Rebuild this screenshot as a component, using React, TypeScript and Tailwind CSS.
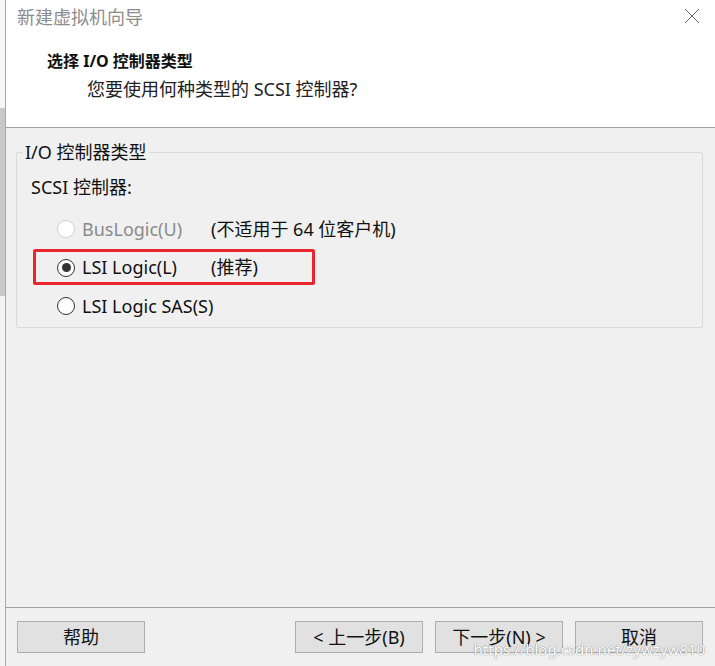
import React from "react";

const font = "font-['Noto_Sans','Noto_Sans_CJK_SC',sans-serif]";

function Radio({ checked, disabled }: { checked?: boolean; disabled?: boolean }) {
    return (
        <span
            className={`flex h-[18px] w-[18px] shrink-0 items-center justify-center rounded-full border bg-white ${
                disabled ? "border-[#cfcfcf]" : "border-[#333]"
            }`}
        >
            {checked && <span className="h-[9px] w-[9px] rounded-full bg-[#333]" />}
        </span>
    );
}

function Option({
    label,
    note,
    checked,
    disabled,
    marked,
}: {
    label: string;
    note?: string;
    checked?: boolean;
    disabled?: boolean;
    marked?: boolean;
}) {
    return (
        <div className="relative flex h-[38.5px] items-center pl-[40px]">
            {marked && (
                <span className="absolute left-[16px] top-0 h-[36px] w-[282px] rounded-[2px] border-[3px] border-[#e8262e]" />
            )}
            <Radio checked={checked} disabled={disabled} />
            <span
                className={`ml-[7px] w-[122px] shrink-0 whitespace-nowrap text-[18px] ${
                    disabled ? "text-[#8a8a8a]" : "text-[#111]"
                }`}
            >
                {label}
            </span>
            {note && <span className="ml-[7px] whitespace-nowrap text-[18px] text-[#111]">{note}</span>}
        </div>
    );
}

function Button({ children }: { children: React.ReactNode }) {
    return (
        <button className="flex h-[32px] w-[128px] items-center justify-center border border-[#adadad] bg-[#e1e1e1] text-[18px] text-[#111]">
            {children}
        </button>
    );
}

export default function App() {
    return (
        <div className={`flex h-[666px] w-[715px] overflow-hidden bg-white ${font}`}>
            {/* strip of the window behind */}
            <div className="flex w-[5px] flex-col">
                <div className="h-[108px] bg-[#f7f7f7]" />
                <div className="h-[188px] bg-[#c9c9c9]" />
                <div className="flex-1 bg-[#f3f3f3]" />
            </div>
            <div className="w-px bg-[#a9a9a9]" />

            <div className="relative flex flex-1 flex-col">
                {/* title bar + header */}
                <div className="h-[127px] bg-white">
                    <div className="flex h-[34px] items-center justify-between pl-[11px] pr-[15px]">
                        <span className="text-[18px] text-[#8c8c8c]">新建虚拟机向导</span>
                        <svg width="16" height="16" viewBox="0 0 16 16" className="mb-[2px]">
                            <path d="M1 1 L15 15 M15 1 L1 15" stroke="#6a6a6a" strokeWidth="1" />
                        </svg>
                    </div>
                    <div className="pl-[41px] pt-[14px] text-[16px] font-bold leading-[26px] text-[#111]">
                        选择 I/O 控制器类型
                    </div>
                    <div className="pl-[81px] pt-[2px] text-[18px] leading-[26px] text-[#222]">
                        您要使用何种类型的 SCSI 控制器?
                    </div>
                </div>
                <div className="h-px bg-[#a0a0a0]" />

                {/* body */}
                <div className="flex flex-1 flex-col bg-[#f0f0f0] pl-[10px] pr-[12px]">
                    <div className="relative mt-[24px] h-[176px] rounded-[2px] border border-[#d9d9d9]">
                        <span className="absolute left-[6px] top-[-14px] bg-[#f0f0f0] px-[2px] text-[18px] leading-[26px] text-[#111]">
                            I/O 控制器类型
                        </span>
                        <div className="pl-[14px] pt-[22px] text-[18px] leading-[24px] text-[#111]">SCSI 控制器:</div>
                        <div className="mt-[11px]">
                            <Option label="BusLogic(U)" note="(不适用于 64 位客户机)" disabled />
                            <Option label="LSI Logic(L)" note="(推荐)" checked marked />
                            <Option label="LSI Logic SAS(S)" />
                        </div>
                    </div>
                </div>

                <div className="h-px bg-[#a0a0a0]" />
                <div className="flex h-[58px] items-start bg-[#f0f0f0] pl-[11px] pr-[12px] pt-[13px]">
                    <Button>帮助</Button>
                    <div className="flex-1" />
                    <div className="flex gap-[12px]">
                        <Button>&lt; 上一步(B)</Button>
                        <Button>下一步(N) &gt;</Button>
                        <Button>取消</Button>
                    </div>
                </div>

                <span className="absolute bottom-[6px] right-[10px] text-[15px] text-white [text-shadow:0_0_1px_#8a8a8a,0_0_1px_#8a8a8a]">
                    https://blog.csdn.net/zywzyw810
                </span>
            </div>
        </div>
    );
}
